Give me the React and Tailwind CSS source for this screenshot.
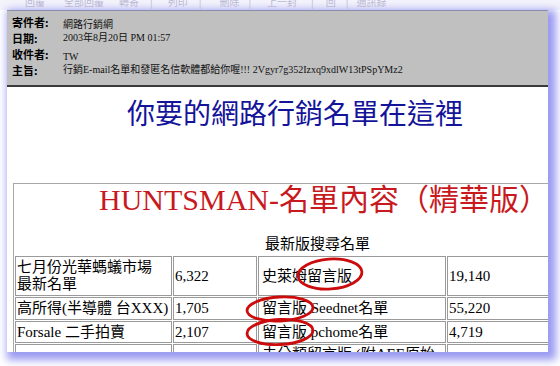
const serif = { fontFamily: '"Liberation Serif", "Noto Sans CJK TC", serif' }
const cjk = { fontFamily: '"Noto Sans CJK TC", "Liberation Sans", sans-serif' }

const headerRows = [
  ['寄件者:', '網路行銷網', 'pt-[3px]'],
  ['日期:', '2003年8月20日 PM 01:57', ''],
  ['收件者:', 'TW', 'pt-[3px]'],
  ['主旨:', '行銷E-mail名單和發匿名信軟體都給你喔!!! 2Vgyr7g352Izxq9xdlW13tPSpYMz2', ''],
]

const rows = [
  { name: ['七月份光華螞蟻市場', '最新名單'], count: '6,322', list: '史萊姆留言版', total: '19,140', h: 'h-[40px]' },
  { name: ['高所得(半導體 台XXX)'], count: '1,705', list: '留言版 Seednet名單', total: '55,220', h: 'h-[23px]' },
  { name: ['Forsale 二手拍賣'], count: '2,107', list: '留言版 pchome名單', total: '4,719', h: 'h-[22px]' },
  { name: ['XXX通訊錄'], count: '3,412', list: '未分類留言版 (附AEE原始檔)', total: '105,462', h: 'h-[38px]' },
]

function Toolbar() {
  const items = [
    ['回覆', 'ml-[25px]'],
    ['全部回覆', 'ml-[19px]'],
    ['轉寄', 'ml-[15px]'],
    ['|', 'ml-[11px]'],
    ['列印', 'ml-[15px]'],
    ['|', 'ml-[11px]'],
    ['刪除', 'ml-[18px]'],
    ['|', 'ml-[9px]'],
    ['上一封', 'ml-[16px]'],
    ['|', 'ml-[14px]'],
    ['回', 'ml-[12px]'],
    ['|', 'ml-[10px]'],
    ['通訊錄', 'ml-[8px]'],
  ]
  return (
    <div className="h-[10px] overflow-hidden bg-[#f4f4fc]">
      <div className="-mt-[5px] flex text-[10px] leading-[14px] text-[#b9b9d2]" style={cjk}>
        {items.map(([t, m], i) => (
          <span key={i} className={m}>{t}</span>
        ))}
      </div>
    </div>
  )
}

function MailHeader() {
  return (
    <div className="border-t border-[#8c8cab] border-b-2 border-b-[#3a3a3a] bg-[#c0c0c0]">
      <div className="h-[74px] pl-[5px] pt-[3px]">
        {headerRows.map(([label, value, pad]) => (
          <div key={label} className="flex h-[16px] items-start">
            <span className="w-[51px] text-[11px] font-bold leading-[16px] text-black" style={cjk}>{label}</span>
            <span className={`whitespace-nowrap text-[10px] leading-[16px] text-[#111] ${pad}`} style={serif}>{value}</span>
          </div>
        ))}
      </div>
    </div>
  )
}

function Ellipses() {
  return (
    <svg className="pointer-events-none absolute left-0 top-0" width="560" height="366" viewBox="0 0 560 366">
      <g fill="none" stroke="#cc0c0c" strokeWidth="2.8">
        <ellipse cx="330" cy="274" rx="32" ry="15" transform="rotate(-4 330 274)" />
        <ellipse cx="280" cy="309" rx="33" ry="12" transform="rotate(-3 280 309)" />
        <ellipse cx="280" cy="332" rx="33" ry="12.5" transform="rotate(-3 280 332)" />
      </g>
    </svg>
  )
}

export default function App() {
  return (
    <div className="relative h-[366px] w-[560px] overflow-hidden bg-white">
      <Toolbar />
      <div className="ml-[7px] h-[342px] w-[541px] overflow-hidden bg-white shadow-[4px_4px_8px_4px_rgba(115,115,235,0.72)]">
        <MailHeader />
        <div className="pl-[120px] pt-[8px]">
          <div className="whitespace-nowrap text-[28px] leading-[34px] text-[#14149a]" style={cjk}>
            你要的網路行銷名單在這裡
          </div>
        </div>
        <table
          className="ml-[6px] mt-[54px] w-[640px] table-fixed border-separate border-spacing-[1px] border border-[#a8a8a8] text-black"
          style={serif}
        >
          <colgroup>
            <col className="w-[157px]" />
            <col className="w-[84px]" />
            <col className="w-[188px]" />
            <col />
          </colgroup>
          <tbody>
            <tr>
              <td colSpan={4} className="h-[70px] p-0 align-top">
                <div className="whitespace-nowrap pl-[84px] text-[30px] leading-[30px] text-[#c81a1e]">
                  HUNTSMAN-名單內容（精華版）
                </div>
                <div className="mt-[19px] whitespace-nowrap pl-[250px] text-[15px] leading-[18px]" style={cjk}>
                  最新版搜尋名單
                </div>
              </td>
            </tr>
            {rows.map((r) => (
              <tr key={r.count} className={r.h}>
                <td className="whitespace-nowrap border border-[#9a9a9a] px-[1px] py-0 align-middle text-[15px] leading-[17px]">
                  {r.name.map((n) => (
                    <div key={n}>{n}</div>
                  ))}
                </td>
                <td className="border border-[#9a9a9a] px-[1px] py-0 align-middle text-[15px] leading-[17px]">{r.count}</td>
                <td className="border border-[#9a9a9a] px-[3px] py-0 align-middle text-[15px] leading-[17px]">{r.list}</td>
                <td className="border border-[#9a9a9a] px-[1px] py-0 align-middle text-[15px] leading-[17px]">{r.total}</td>
              </tr>
            ))}
          </tbody>
        </table>
      </div>
      <Ellipses />
    </div>
  )
}
